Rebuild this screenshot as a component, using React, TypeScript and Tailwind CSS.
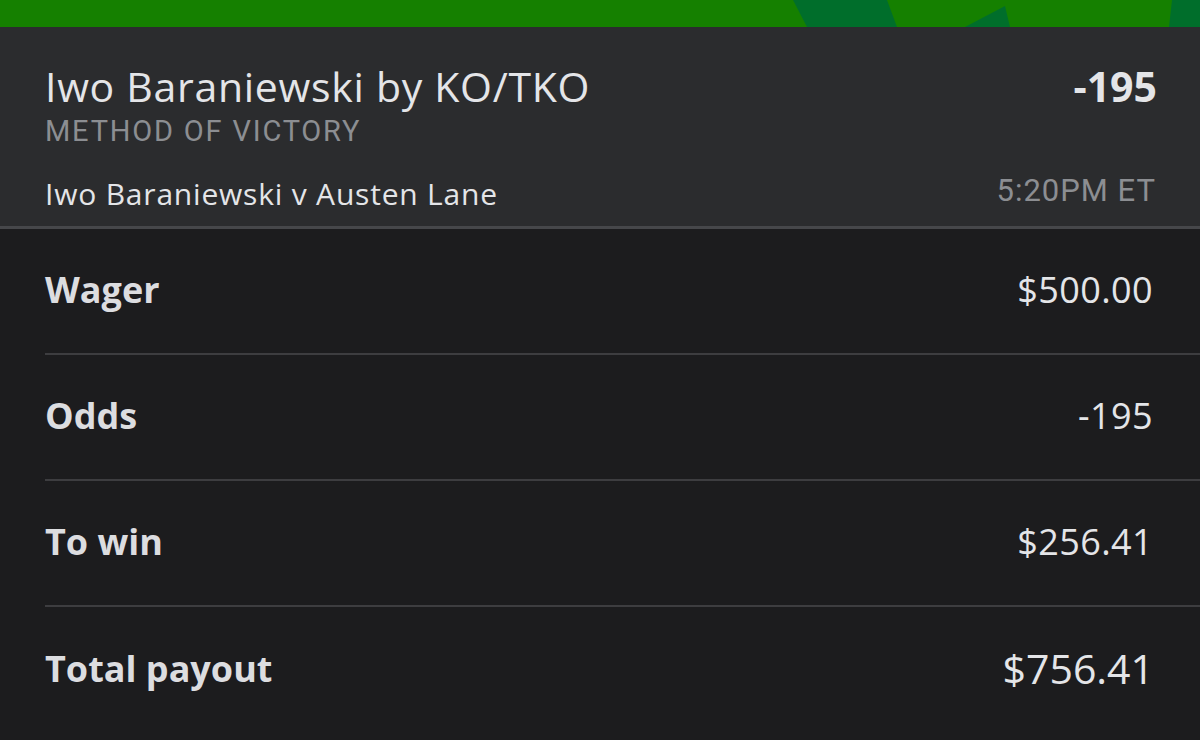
import React from "react";

const rows = [
  { label: "Wager", value: "$500.00", big: false },
  { label: "Odds", value: "-195", big: false },
  { label: "To win", value: "$256.41", big: false },
  { label: "Total payout", value: "$756.41", big: true },
];

export default function App() {
  return (
    <div className="w-[1200px] h-[740px] overflow-hidden bg-[#1c1c1e] flex flex-col" style={{ fontFamily: "'Open Sans', Lato, sans-serif" }}>
      <div className="h-[27px] w-full shrink-0">
        <svg width="1200" height="27" viewBox="0 0 1200 27" className="block">
          <rect width="1200" height="27" fill="#158000" />
          <polygon points="793,0 887,0 897,27 807,27" fill="#006e2b" />
          <polygon points="965,27 1005,6 1010,27" fill="#006e2b" />
          <polygon points="1172,0 1200,0 1200,27 1169,27" fill="#006e2b" />
        </svg>
      </div>
      <div className="h-[202px] shrink-0 bg-[#2b2c2e] border-b-[3px] border-[#46474a] px-[45px] flex flex-col">
        <div className="flex justify-between items-start mt-[32px]">
          <div className="flex flex-col">
            <div className="text-[41px] leading-[54px] font-normal tracking-[0.7px] text-[#e4e5e8]">Iwo Baraniewski by KO/TKO</div>
            <div className="text-[29px] leading-[30px] tracking-[1.8px] text-[#8c8e92] mt-[3px]" style={{ fontFamily: "Roboto, sans-serif" }}>METHOD OF VICTORY</div>
          </div>
          <div className="text-[41px] leading-[54px] font-bold text-[#e4e5e8] -mr-[2px]">-195</div>
        </div>
        <div className="flex justify-between items-start mt-[27px]">
          <div className="text-[30px] leading-[36px] tracking-[0.8px] text-[#e4e5e8] mt-[3px]">Iwo Baraniewski v Austen Lane</div>
          <div className="text-[31px] leading-[36px] tracking-[1px] text-[#8c8e92] -mr-[1px]" style={{ fontFamily: "Roboto, sans-serif" }}>5:20PM ET</div>
        </div>
      </div>
      <div className="flex flex-col pl-[45px]">
        {rows.map((r, i) => (
          <div key={r.label} className={`h-[126px] shrink-0 flex items-center justify-between pr-[47px] ${i < rows.length - 1 ? "border-b-2 border-[#3d3d40]" : ""}`}>
            <div className="text-[36px] font-bold text-[#dcdde0] -mt-[2px]">{r.label}</div>
            <div className={r.big ? "text-[41px] text-[#e4e5e8] -mr-[1px] -mt-[2px]" : "text-[36px] tracking-[0.4px] text-[#e4e5e8] -mt-[2px]"}>{r.value}</div>
          </div>
        ))}
      </div>
    </div>
  );
}
